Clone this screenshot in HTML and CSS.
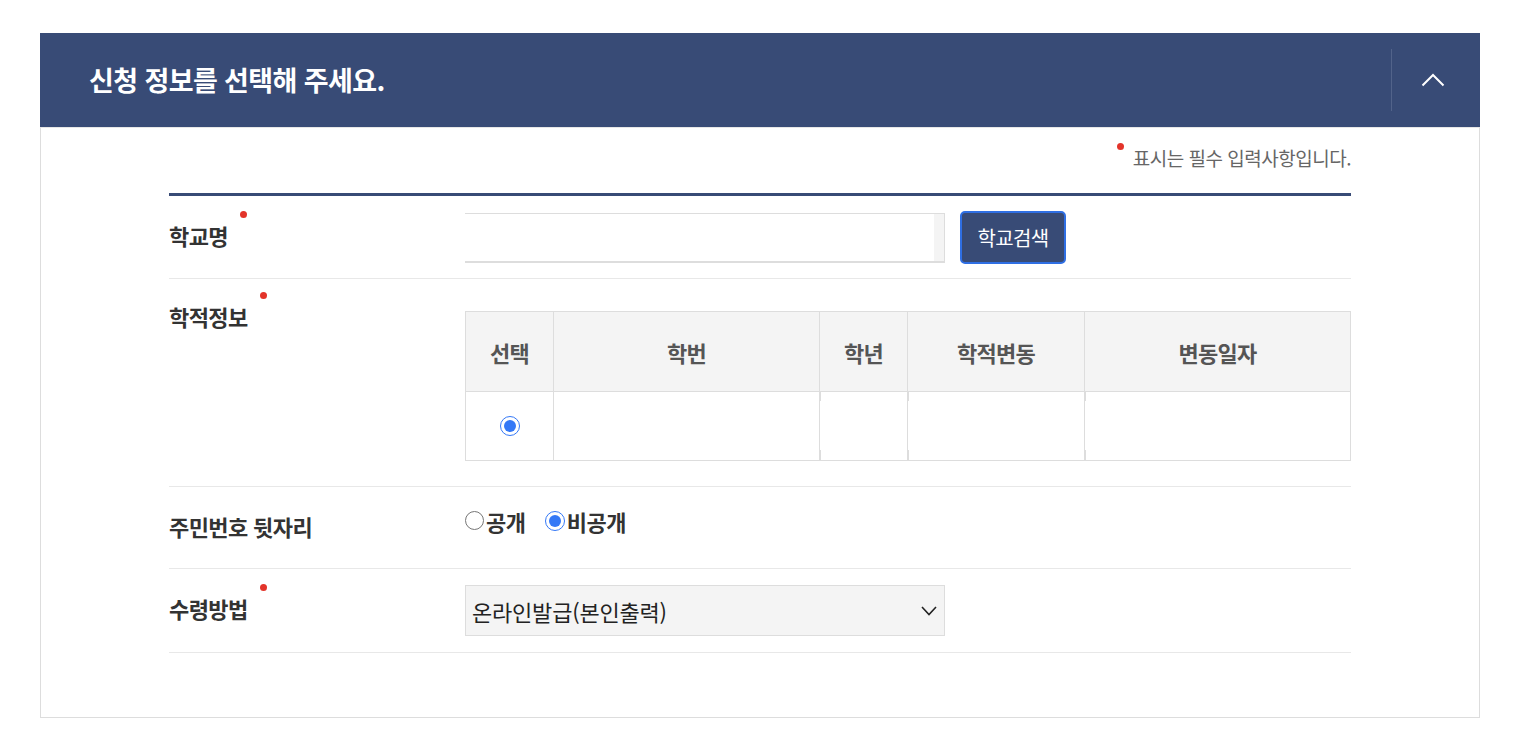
FILE: index.html
```html
<!DOCTYPE html>
<html lang="ko">

<head>
    <meta charset="UTF-8">
    <meta name="viewport" content="width=device-width, initial-scale=1.0">
    <title>신청 정보 선택</title>
    <link rel="stylesheet" href="styles.css">
</head>

<body>

    <section class="panel">
        <div class="panel-head">
            <h2 class="panel-title">신청 정보를 선택해 주세요.</h2>
            <button class="toggle" type="button" aria-label="접기">
                <svg width="24" height="14" viewBox="0 0 24 14">
                    <path d="M1.5 12.5 L12 2 L22.5 12.5" fill="none" stroke="#fff" stroke-width="2" />
                </svg>
            </button>
        </div>

        <div class="panel-body">
            <p class="note"><span class="dot"></span>표시는 필수 입력사항입니다.</p>

            <div class="form">
                <div class="row">
                    <div class="label">학교명<span class="dot"></span></div>
                    <div class="field">
                        <input type="text" class="text-input">
                        <button type="button" class="btn-search">학교검색</button>
                    </div>
                </div>

                <div class="row row-top">
                    <div class="label">학적정보<span class="dot"></span></div>
                    <div class="field">
                        <table class="grid">
                            <colgroup>
                                <col style="width: 88px">
                                <col style="width: 266px">
                                <col style="width: 88px">
                                <col style="width: 177px">
                                <col>
                            </colgroup>
                            <thead>
                                <tr>
                                    <th>선택</th>
                                    <th>학번</th>
                                    <th>학년</th>
                                    <th>학적변동</th>
                                    <th>변동일자</th>
                                </tr>
                            </thead>
                            <tbody>
                                <tr>
                                    <td><input type="radio" name="record" class="radio cell-radio" checked></td>
                                    <td></td>
                                    <td class="split"></td>
                                    <td class="split"></td>
                                    <td class="split"></td>
                                </tr>
                            </tbody>
                        </table>
                    </div>
                </div>

                <div class="row row-short">
                    <div class="label">주민번호 뒷자리</div>
                    <div class="field options">
                        <label class="opt"><input type="radio" name="rrn" class="radio small">공개</label>
                        <label class="opt"><input type="radio" name="rrn" class="radio" checked>비공개</label>
                    </div>
                </div>

                <div class="row row-last">
                    <div class="label">수령방법<span class="dot"></span></div>
                    <div class="field">
                        <div class="select-box">
                            <select>
                                <option>온라인발급(본인출력)</option>
                            </select>
                            <svg width="16" height="10" viewBox="0 0 16 10">
                                <path d="M1 1 L8 8.5 L15 1" fill="none" stroke="#222" stroke-width="1.6" />
                            </svg>
                        </div>
                    </div>
                </div>
            </div>
        </div>
    </section>

</body>

</html>
```

FILE: styles.css
```css
body {
    margin: 0;
    padding: 33px 42px 20px 40px;
    background-color: #fff;
    font-family: "Noto Sans CJK KR", "Noto Sans", sans-serif;
    color: #333;
}

.panel {
    width: 1440px;
}

.panel-head {
    display: flex;
    align-items: center;
    height: 94px;
    background-color: #384b76;
}

.panel-title {
    flex: 1;
    margin: 0 0 2px;
    padding-left: 49px;
    font-size: 27px;
    font-weight: 700;
    letter-spacing: -0.6px;
    color: #fff;
}

.toggle {
    width: 89px;
    height: 62px;
    padding: 0 6px 0 0;
    border: none;
    border-left: 1px solid #52638a;
    background: none;
    cursor: pointer;
    display: flex;
    align-items: center;
    justify-content: center;
}

.panel-body {
    border: 1px solid #ddd;
    border-top-color: #e6e6e6;
    padding: 16px 128px 64px 128px;
}

.note {
    margin: 0 0 22px;
    text-align: right;
    font-size: 19px;
    letter-spacing: -0.5px;
    color: #666;
}

.note .dot {
    margin: -1px 9px 0 0;
}

.dot {
    display: inline-block;
    width: 7px;
    height: 7px;
    border-radius: 50%;
    background-color: #e3342a;
    vertical-align: top;
    margin: -9px 0 0 12px;
}

.form {
    border-top: 3px solid #384b76;
}

.row {
    display: grid;
    grid-template-columns: 296px 1fr;
    align-items: center;
    padding: 15px 0 14px;
    border-bottom: 1px solid #e8e8e8;
}

.row-top {
    align-items: start;
    padding: 32px 0 25px;
}

.row-top .label {
    margin-top: -10px;
}

.row-short {
    padding-bottom: 13px;
}

.row-last {
    padding-bottom: 15px;
}

.label {
    padding-bottom: 6px;
    font-size: 22px;
    font-weight: 700;
    line-height: 30px;
    letter-spacing: -0.6px;
    color: #333;
}

.field {
    display: flex;
    align-items: center;
    gap: 15px;
    min-height: 53px;
}

.text-input {
    box-sizing: border-box;
    width: 480px;
    height: 50px;
    margin: 0;
    border: 1px solid #ddd;
    border-left: none;
    border-bottom-width: 2px;
    box-shadow: inset -10px 0 0 #f4f4f4;
    outline: none;
}

.btn-search {
    box-sizing: border-box;
    width: 106px;
    height: 53px;
    border: 2px solid #2f6fe4;
    border-radius: 5px;
    background-color: #384b76;
    color: #fff;
    font-family: inherit;
    font-size: 20px;
    letter-spacing: -0.6px;
    cursor: pointer;
}

.grid {
    width: 886px;
    border-collapse: collapse;
    table-layout: fixed;
}

.grid th,
.grid td {
    border: 1px solid #ddd;
    text-align: center;
}

.grid th {
    height: 79px;
    padding: 0;
    background-color: #f4f4f4;
    font-size: 22px;
    font-weight: 700;
    letter-spacing: -0.8px;
    color: #555;
}

.grid td {
    height: 68px;
    padding: 0;
}

.grid td.split {
    border-left: none;
    background:
        linear-gradient(#ddd, #ddd) left top / 1px 9px no-repeat,
        linear-gradient(#ddd, #ddd) left bottom / 1px 10px no-repeat;
}

.radio {
    width: 20px;
    height: 20px;
    margin: 0;
    accent-color: #3478f6;
}

.radio.small {
    width: 19px;
    height: 19px;
}

.cell-radio {
    display: block;
    margin: 0 auto;
}

.options {
    gap: 19px;
    padding-bottom: 16px;
    box-sizing: border-box;
}

.opt {
    display: flex;
    align-items: center;
    gap: 2px;
    font-size: 22px;
    font-weight: 700;
    letter-spacing: -0.4px;
    color: #333;
}

.select-box {
    box-sizing: border-box;
    display: flex;
    align-items: center;
    width: 480px;
    height: 51px;
    padding: 0 7px 0 6px;
    border: 1px solid #ddd;
    background-color: #f4f4f4;
}

.select-box select {
    flex: 1;
    appearance: none;
    border: none;
    background: none;
    outline: none;
    font-family: inherit;
    font-size: 22px;
    letter-spacing: -0.2px;
    color: #222;
    padding: 0;
}
```
